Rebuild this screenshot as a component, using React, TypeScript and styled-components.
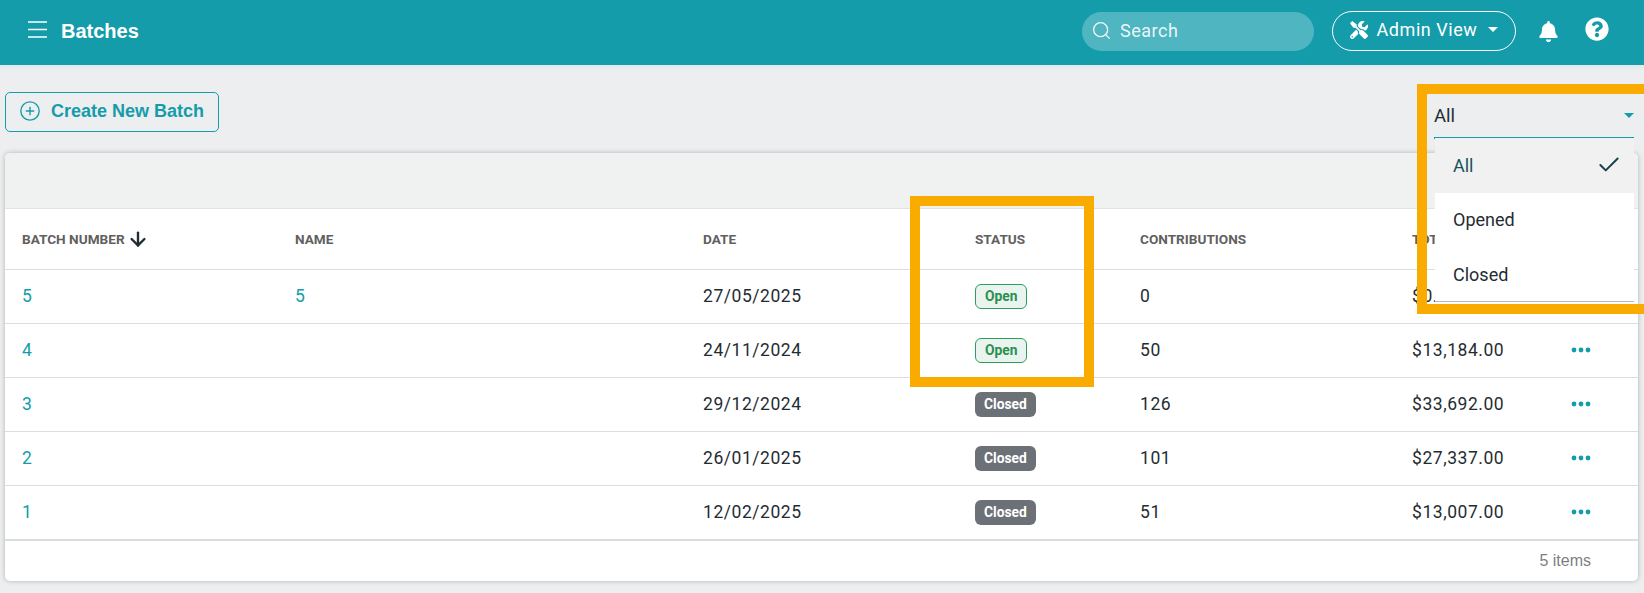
import React from 'react';
import styled, { createGlobalStyle } from 'styled-components';
import { ArrowDown, Check, CirclePlus, Search } from 'lucide-react';
import { FaBell, FaQuestionCircle, FaTools } from 'react-icons/fa';

const GlobalStyle = createGlobalStyle`
  html, body {
    margin: 0;
    padding: 0;
    background: #eceeef;
    overflow: hidden;
  }
  body {
    font-family: Roboto, "Liberation Sans", sans-serif;
    color: #1f2d33;
  }
`;

const Page = styled.div`
  position: relative;
  width: 1644px;
  height: 593px;
  overflow: hidden;
`;

const Header = styled.header`
  height: 65px;
  box-sizing: border-box;
  background: #149cab;
  display: flex;
  align-items: center;
  padding: 0 35px 3px 28px;
  box-shadow: 0 3px 3px rgba(20, 156, 171, 0.05);
  color: #fff;
`;

const Burger = styled.svg`
  margin-bottom: 3px;
`;

const Title = styled.h1`
  margin: 0 0 0 13px;
  font: bold 20px "Liberation Sans", Arial, sans-serif;
  flex: 1;
`;

const SearchBox = styled.div`
  width: 232px;
  height: 39px;
  box-sizing: border-box;
  border-radius: 20px;
  background: rgba(255, 255, 255, 0.25);
  display: flex;
  align-items: center;
  gap: 8px;
  padding: 0 9px 2px;
  font-size: 18px;
  letter-spacing: 0.5px;
  color: rgba(255, 255, 255, 0.9);
`;

const RoleButton = styled.button`
  margin-left: 18px;
  width: 184px;
  height: 40px;
  box-sizing: border-box;
  border: 1px solid #fff;
  border-radius: 20px;
  background: transparent;
  color: #fff;
  display: flex;
  align-items: center;
  justify-content: center;
  gap: 9px;
  padding: 0 0 3px;
  font: 18px Roboto, sans-serif;
  letter-spacing: 0.55px;
`;

const Caret = styled.span<{ $color: string }>`
  width: 0;
  height: 0;
  margin-left: 2px;
  border-left: 5.5px solid transparent;
  border-right: 5.5px solid transparent;
  border-top: 5.5px solid ${p => p.$color};
`;

const BellIcon = styled.span`
  display: flex;
  margin-left: 22px;
`;

const HelpIcon = styled.span`
  display: flex;
  margin: 0 0 5px 26px;
`;

const Toolbar = styled.div`
  height: 88px;
  box-sizing: border-box;
  display: flex;
  justify-content: space-between;
  align-items: flex-start;
  padding: 27px 10px 0 5px;
`;

const CreateButton = styled.button`
  width: 214px;
  height: 40px;
  box-sizing: border-box;
  border: 1px solid #149cab;
  border-radius: 5px;
  background: transparent;
  color: #149cab;
  display: flex;
  align-items: center;
  padding: 0 0 2px 13px;
  gap: 10px;
  font: bold 18px "Liberation Sans", Arial, sans-serif;
`;

const Select = styled.div`
  width: 200px;
  height: 45px;
  margin-top: 2px;
  box-sizing: border-box;
  border-bottom: 2px solid #149cab;
  display: flex;
  align-items: center;
  justify-content: space-between;
  font-size: 18.5px;
`;

const Card = styled.section`
  margin: 0 6px 0 5px;
  height: 428px;
  background: #fff;
  border-radius: 5px;
  box-shadow: 0 0 5px rgba(0, 0, 0, 0.25);
  display: flex;
  flex-direction: column;
  overflow: hidden;
`;

const CardBar = styled.div`
  height: 56px;
  box-sizing: border-box;
  flex: none;
  background: #f0f1f1;
  border-bottom: 1px solid #e2e3e3;
`;

const Table = styled.table`
  width: 100%;
  table-layout: fixed;
  border-collapse: collapse;
  font-size: 17.5px;
  letter-spacing: 0.55px;
`;

const Th = styled.th<{ $w?: number }>`
  width: ${p => (p.$w ? `${p.$w}px` : 'auto')};
  height: 60px;
  box-sizing: border-box;
  padding: 0 0 0 17px;
  text-align: left;
  font-size: 13.6px;
  font-weight: 700;
  letter-spacing: 0;
  color: #625f5f;
  border-bottom: 1px solid #dcdddd;
`;

const SortHead = styled.span`
  display: inline-flex;
  align-items: center;
  gap: 2px;
`;

const Td = styled.td`
  height: 54px;
  box-sizing: border-box;
  padding: 0 0 0 17px;
  border-bottom: 1px solid #dcdddd;
`;

const LinkText = styled.span`
  color: #149cab;
`;

const Badge = styled.span<{ $open: boolean }>`
  display: inline-block;
  height: 25px;
  line-height: ${p => (p.$open ? 23 : 25)}px;
  box-sizing: border-box;
  padding: 0 9px;
  border-radius: 6px;
  font-size: 13.8px;
  font-weight: 700;
  letter-spacing: 0;
  vertical-align: middle;
  color: ${p => (p.$open ? '#2a9050' : '#fff')};
  background: ${p => (p.$open ? '#eaf4ee' : '#6c7178')};
  border: ${p => (p.$open ? '1px solid #2e9c5e' : 'none')};
`;

const DotsIcon = styled.svg`
  display: block;
`;

const CardFooter = styled.div`
  flex: 1;
  border-top: 1px solid #dcdddd;
  display: flex;
  align-items: center;
  justify-content: flex-end;
  padding-right: 47px;
  font: 16px "Liberation Sans", Arial, sans-serif;
  color: #7c7f81;
`;

const Menu = styled.ul`
  position: absolute;
  top: 138px;
  left: 1435px;
  width: 199px;
  height: 164px;
  margin: 0;
  padding: 0;
  box-sizing: border-box;
  list-style: none;
  background: #fff;
  border-bottom: 1px solid #b8b9ba;
  font-size: 18px;
`;

const MenuItem = styled.li<{ $active?: boolean }>`
  height: 54.5px;
  padding: 0 12px 0 18px;
  display: flex;
  align-items: center;
  justify-content: space-between;
  background: ${p => (p.$active ? '#f1f1f1' : 'transparent')};
  color: ${p => (p.$active ? '#17535e' : '#1f2d33')};
`;

const Highlight = styled.div<{ $x: number; $y: number; $w: number; $h: number }>`
  position: absolute;
  left: ${p => p.$x}px;
  top: ${p => p.$y}px;
  width: ${p => p.$w}px;
  height: ${p => p.$h}px;
  box-sizing: border-box;
  border: 10px solid #f9ab00;
  pointer-events: none;
`;

const MenuIcon = () => (
  <Burger width="20" height="17" viewBox="0 0 20 17" stroke="#fff" strokeWidth="1.4">
    <path d="M0 1h19M0 8.5h19M0 16h19" />
  </Burger>
);

const Dots = () => (
  <DotsIcon width="20" height="6" viewBox="0 0 20 6" fill="#149cab">
    <circle cx="3" cy="3" r="2.4" />
    <circle cx="10" cy="3" r="2.4" />
    <circle cx="17" cy="3" r="2.4" />
  </DotsIcon>
);

const batches = [
  { id: '5', name: '5', date: '27/05/2025', open: true, count: 0, total: '$0.00' },
  { id: '4', name: '', date: '24/11/2024', open: true, count: 50, total: '$13,184.00' },
  { id: '3', name: '', date: '29/12/2024', open: false, count: 126, total: '$33,692.00' },
  { id: '2', name: '', date: '26/01/2025', open: false, count: 101, total: '$27,337.00' },
  { id: '1', name: '', date: '12/02/2025', open: false, count: 51, total: '$13,007.00' },
];

const App: React.FC = () => {
  return (
    <Page>
      <GlobalStyle />
      <Header>
        <MenuIcon />
        <Title>Batches</Title>
        <SearchBox>
          <Search size={21} strokeWidth={1.5} />
          Search
        </SearchBox>
        <RoleButton>
          <FaTools size={18} />
          Admin View
          <Caret $color="#fff" />
        </RoleButton>
        <BellIcon>
          <FaBell size={21} />
        </BellIcon>
        <HelpIcon>
          <FaQuestionCircle size={24} />
        </HelpIcon>
      </Header>
      <Toolbar>
        <CreateButton>
          <CirclePlus size={22} strokeWidth={1.5} />
          Create New Batch
        </CreateButton>
        <Select>
          All
          <Caret $color="#149cab" />
        </Select>
      </Toolbar>
      <Card>
        <CardBar />
        <Table>
          <thead>
            <tr>
              <Th $w={273}>
                <SortHead>
                  BATCH NUMBER <ArrowDown size={22} color="#1f2d33" strokeWidth={2.6} />
                </SortHead>
              </Th>
              <Th $w={408}>NAME</Th>
              <Th $w={272}>DATE</Th>
              <Th $w={165}>STATUS</Th>
              <Th $w={272}>CONTRIBUTIONS</Th>
              <Th $w={159}>TOTAL</Th>
              <Th />
            </tr>
          </thead>
          <tbody>
            {batches.map(b => (
              <tr key={b.id}>
                <Td><LinkText>{b.id}</LinkText></Td>
                <Td><LinkText>{b.name}</LinkText></Td>
                <Td>{b.date}</Td>
                <Td><Badge $open={b.open}>{b.open ? 'Open' : 'Closed'}</Badge></Td>
                <Td>{b.count}</Td>
                <Td>{b.total}</Td>
                <Td><Dots /></Td>
              </tr>
            ))}
          </tbody>
        </Table>
        <CardFooter>5 items</CardFooter>
      </Card>
      <Menu>
        <MenuItem $active>
          All
          <Check size={26} color="#17404a" strokeWidth={1.8} />
        </MenuItem>
        <MenuItem>Opened</MenuItem>
        <MenuItem>Closed</MenuItem>
      </Menu>
      <Highlight $x={910} $y={196} $w={184} $h={191} />
      <Highlight $x={1417} $y={84} $w={237} $h={230} />
    </Page>
  );
};

export default App;
